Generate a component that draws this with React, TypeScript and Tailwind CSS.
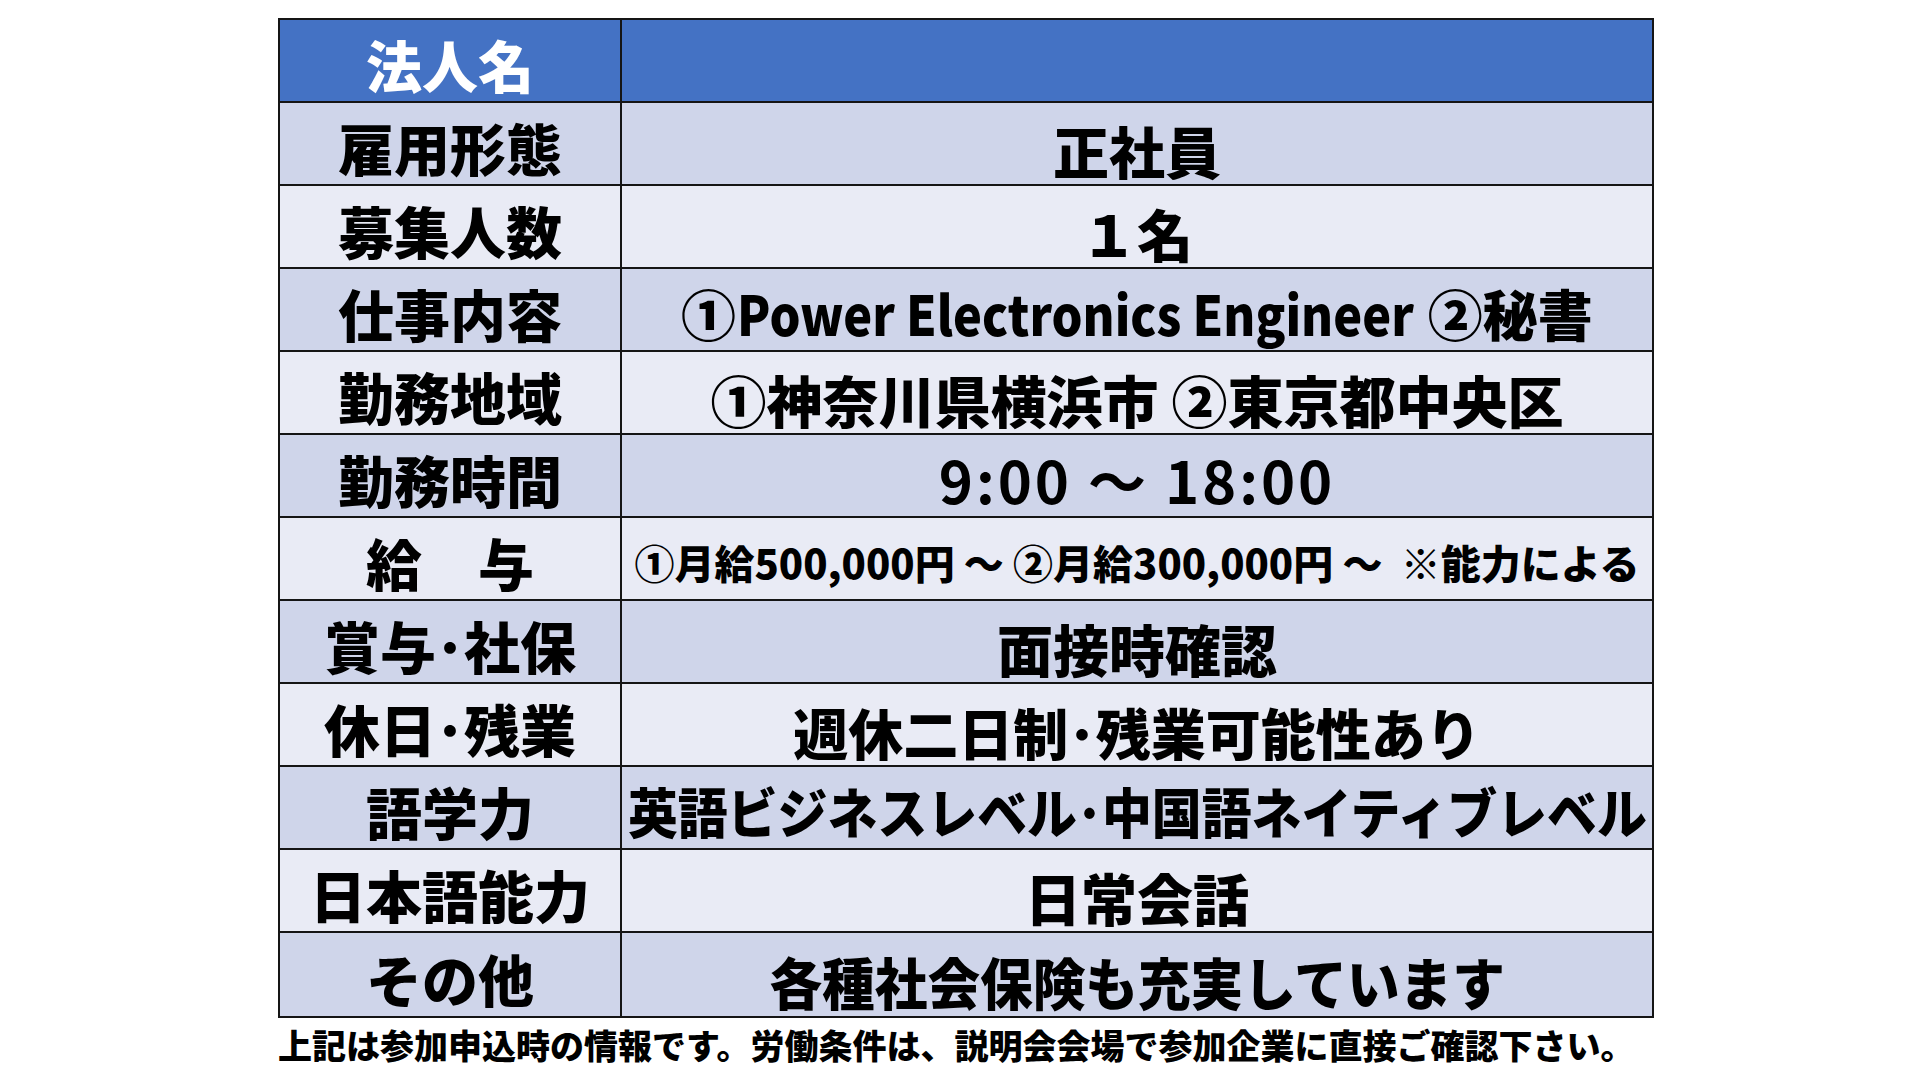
import React from "react";

const FONT = { fontFamily: '"Noto Sans CJK JP", "Noto Sans", sans-serif' };

type Row = { label: string; value: React.ReactNode; dark: boolean; low?: boolean };

const rows: Row[] = [
  { label: "雇用形態", value: <span className="text-[56px]">正社員</span>, dark: true, low: true },
  { label: "募集人数", value: <span className="text-[56px]">１名</span>, dark: false, low: true },
  {
    label: "仕事内容",
    value: (
      <span className="text-[55px] whitespace-nowrap">
        ①<span className="inline-block scale-x-[0.887] origin-center -mx-[42px]">Power Electronics Engineer</span> ②秘書
      </span>
    ),
    dark: true,
  },
  { label: "勤務地域", value: <span className="text-[56px]">①神奈川県横浜市 ②東京都中央区</span>, dark: false, low: true },
  {
    label: "勤務時間",
    value: <span className="text-[58px] font-bold tracking-[0.05em]">9:00 ～ 18:00</span>,
    dark: true,
  },
  {
    label: "給　与",
    value: (
      <span className="text-[40px] whitespace-pre">①月給500,000円 ～ ②月給300,000円 ～  ※能力による</span>
    ),
    dark: false,
  },
  { label: "賞与･社保", value: <span className="text-[56px]">面接時確認</span>, dark: true, low: true },
  {
    label: "休日･残業",
    value: <span className="text-[55px] whitespace-nowrap">週休二日制･残業可能性あり</span>,
    dark: false,
    low: true,
  },
  {
    label: "語学力",
    value: (
      <span className="inline-block text-[54px] whitespace-nowrap scale-x-[0.924] -mx-[45px]">
        英語ビジネスレベル･中国語ネイティブレベル
      </span>
    ),
    dark: true,
  },
  { label: "日本語能力", value: <span className="text-[56px]">日常会話</span>, dark: false, low: true },
  {
    label: "その他",
    value: (
      <span className="inline-block text-[56px] whitespace-nowrap scale-x-[0.94]">各種社会保険も充実しています</span>
    ),
    dark: true,
    low: true,
  },
];

export default function App() {
  return (
    <div className="w-[1920px] h-[1080px] bg-white overflow-hidden" style={FONT}>
      <div className="ml-[278px] pt-[18px] w-[1376px]">
        <div className="border-2 border-[#151515] flex flex-col">
          <div className="grid grid-cols-[342px_minmax(0,1fr)] h-[83px] border-b-2 border-[#151515] bg-[#4472C4]">
            <div className="border-r-2 border-[#151515] flex items-center justify-center pt-[6px] text-white font-black text-[56px] leading-none">
              法人名
            </div>
            <div />
          </div>
          {rows.map((r, i) => (
            <div
              key={i}
              className={
                "grid grid-cols-[342px_minmax(0,1fr)] h-[83px] " +
                (i < rows.length - 1 ? "border-b-2 border-[#151515] " : "") +
                (r.dark ? "bg-[#CFD5EA]" : "bg-[#E9EBF5]")
              }
            >
              <div className="border-r-2 border-[#151515] flex items-center justify-center pt-[6px] text-black font-black text-[56px] leading-none whitespace-nowrap">
                {r.label}
              </div>
              <div
                className={
                  "min-w-0 flex items-center justify-center text-black font-black leading-none " +
                  (r.low ? "pt-[13px]" : "pt-[6px]")
                }
              >
                {r.value}
              </div>
            </div>
          ))}
        </div>
        <div className="text-[34px] font-black text-black leading-none mt-[10px] whitespace-nowrap">
          上記は参加申込時の情報です。労働条件は、説明会会場で参加企業に直接ご確認下さい。
        </div>
      </div>
    </div>
  );
}
